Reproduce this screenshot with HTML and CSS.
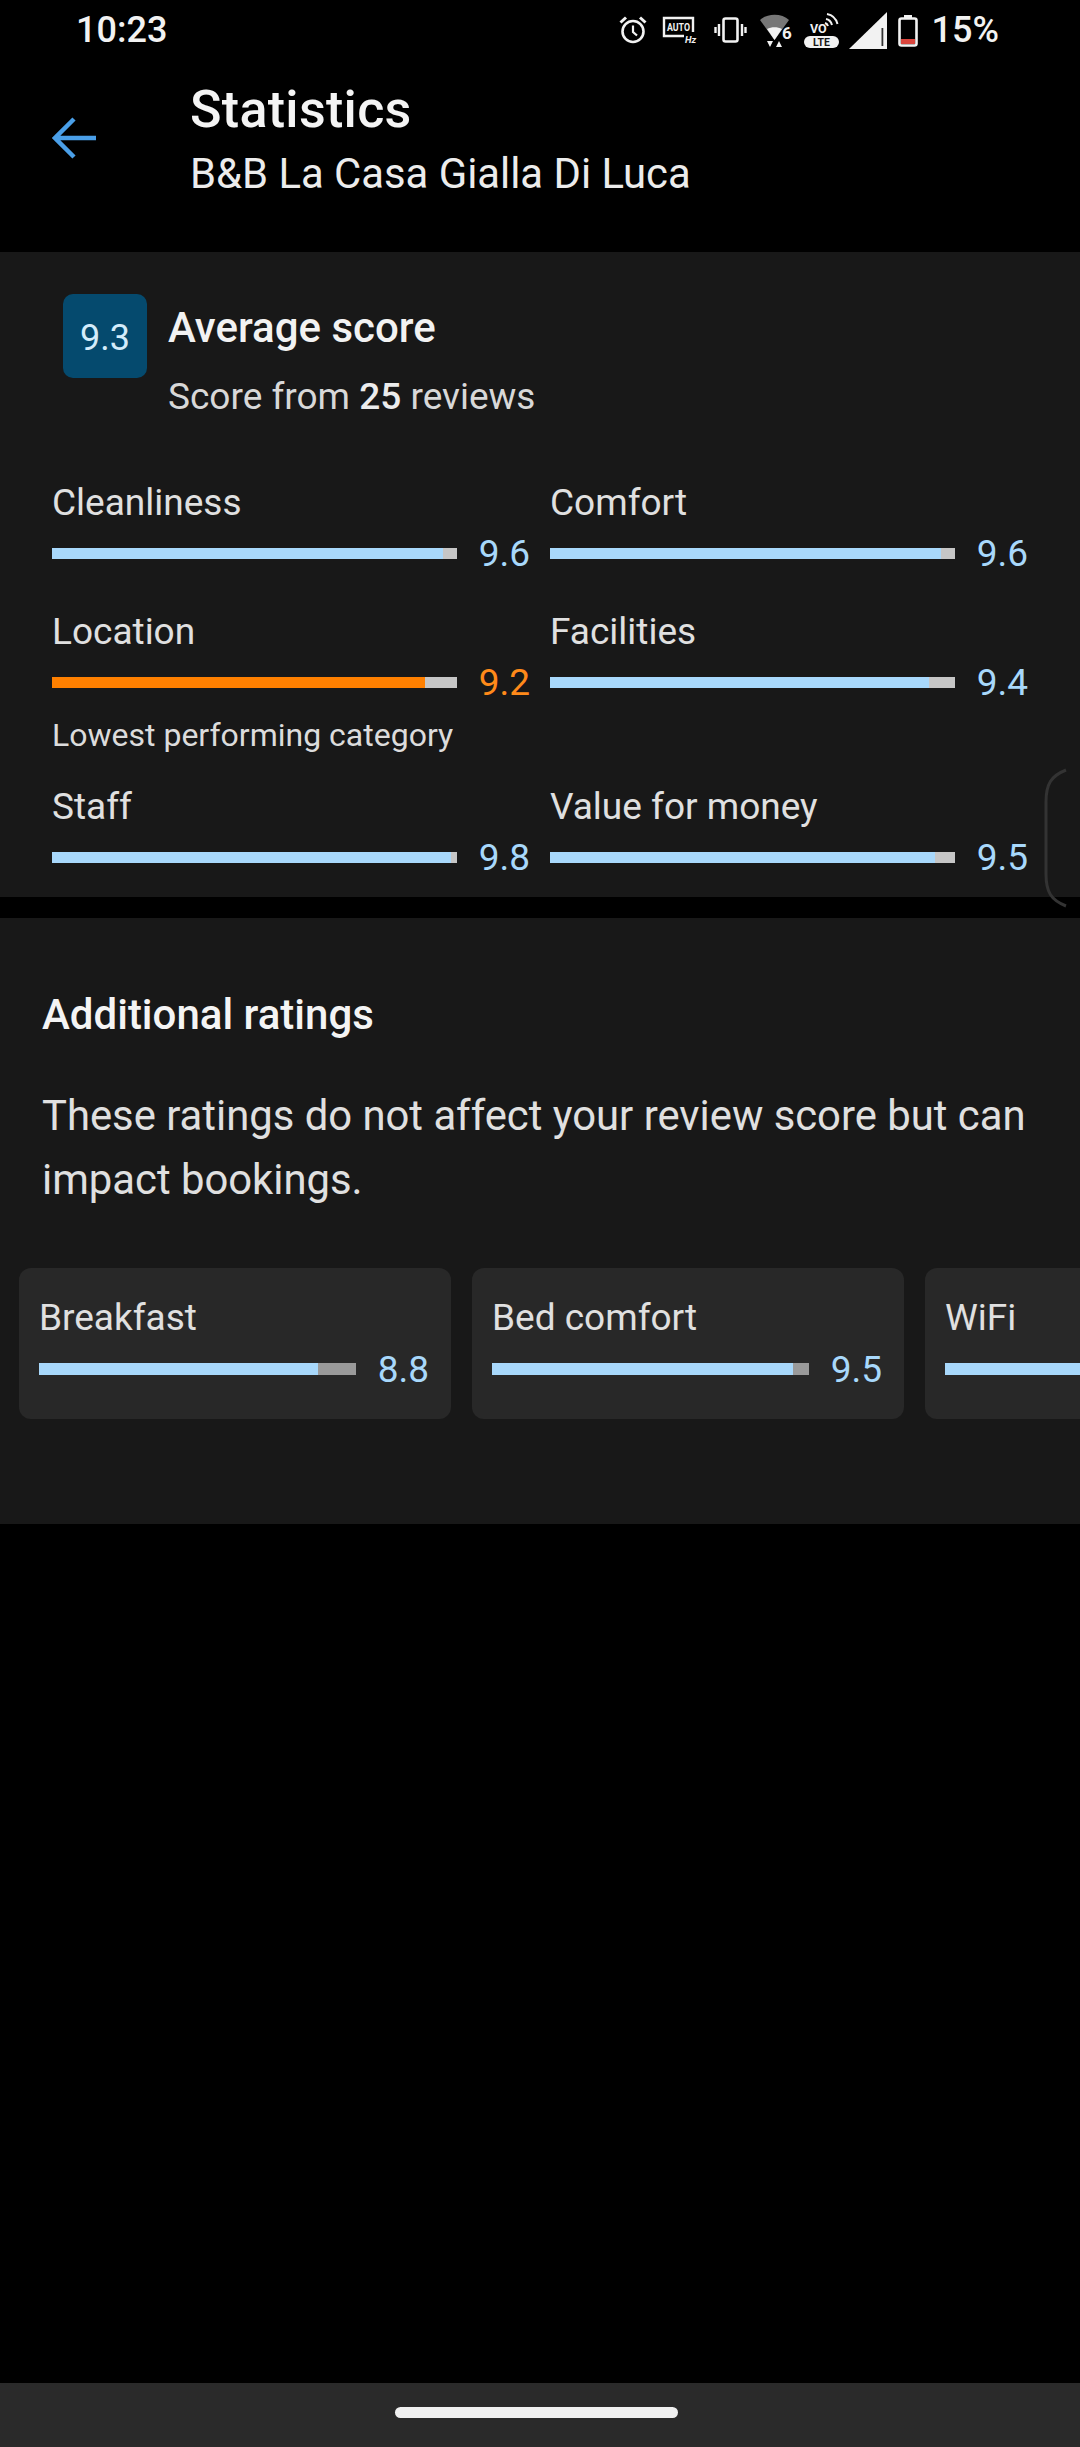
FILE: index.html
```html
<!DOCTYPE html>
<html lang="en">
<head>
<meta charset="utf-8">
<title>Statistics</title>
<link rel="stylesheet" href="styles.css">
</head>
<body>
<div class="screen">
  <div class="status">
    <span class="time">10:23</span>
    <div class="status-right">
      <svg class="ic" width="28" height="28" viewBox="0 0 28 28" fill="none" stroke="#f2f2f2" stroke-width="2.600"><circle cx="14" cy="15.500" r="10.500"/><path d="M14 9.500v6.500l4 3.500" stroke-width="2.200"/><path d="M1.500 6.500 7 1.500M26.500 6.500 21 1.500" stroke-width="3"/></svg>
      <svg class="ic auto" width="36" height="28" viewBox="0 0 36 28" fill="none"><path d="M22 20H2V2h29v14" stroke="#f2f2f2" stroke-width="2.400"/><text class="ic-text" x="16.500" y="15" font-size="11" text-anchor="middle" textLength="23" lengthAdjust="spacingAndGlyphs">AUTO</text><text class="ic-text ic-italic" x="23" y="26.500" font-size="9.500">Hz</text></svg>
      <svg class="ic vib" width="33" height="26" viewBox="0 0 33 26" fill="none" stroke="#f2f2f2"><rect x="9.500" y="1.500" width="14" height="23" rx="2" stroke-width="2.600"/><path d="M5 7v12M1.500 10v6M28 7v12M31.500 10v6" stroke-width="2.400"/></svg>
      <svg class="ic wifi" width="34" height="33" viewBox="0 0 34 33"><path d="M0 6C7-1 22-1 29 6L14.500 26z" fill="#777"/><path d="M7 15c4.500-2.500 10.500-2.500 15 0l-7.500 11z" fill="#f2f2f2"/><path d="M7 27h6l-3 6zM16 33h6l-3-6z" fill="#f2f2f2"/><text class="ic-text" x="22" y="24.500" font-size="17">6</text></svg>
      <svg class="ic volte" width="35" height="35" viewBox="0 0 35 35" fill="none"><rect x="0" y="23" width="35" height="12" rx="6" fill="#f2f2f2"/><text class="ic-text ic-dark" x="17.500" y="33" font-size="10.500" text-anchor="middle">LTE</text><text class="ic-text" x="6" y="20" font-size="12.500">VO</text><path d="M22 6c3 .5 5 2.500 6 6M23 1c5.500 1 9 4.500 10.500 10M21 10c1.500.5 2.500 1.500 3 3" stroke="#f2f2f2" stroke-width="2"/></svg>
      <svg class="ic signal" width="38" height="37" viewBox="0 0 38 37"><path d="M38 0v37H0z" fill="#f2f2f2"/><path d="M32.500 16h1.800v18h-1.800z" fill="#333"/></svg>
      <svg class="ic batt" width="20" height="33" viewBox="0 0 20 33" fill="none"><path d="M6 1h8v3H6z" fill="#f2f2f2"/><rect x="1.500" y="4.500" width="17" height="27" rx="2" stroke="#f2f2f2" stroke-width="2.600"/><rect x="3" y="25" width="14" height="5" fill="#d9453d"/></svg>
      <span class="pct">15%</span>
    </div>
  </div>

  <header class="topbar">
    <svg class="back" width="44" height="42" viewBox="0 0 44 42" fill="none" stroke="#4a9fe8" stroke-width="4.500"><path d="M44 21H3M22 2 3 21l19 19"/></svg>
    <div class="titles">
      <h1 class="title">Statistics</h1>
      <p class="subtitle">B&amp;B La Casa Gialla Di Luca</p>
    </div>
  </header>

  <section class="panel summary-panel">
    <div class="summary">
      <div class="badge">9.3</div>
      <div>
        <h2 class="avg">Average score</h2>
        <p class="from">Score from <b>25</b> reviews</p>
      </div>
    </div>
    <div class="stats">
      <div class="stat">
        <div class="label">Cleanliness</div>
        <div class="row"><div class="track"><div class="fill" style="width:96.5%"></div></div><span class="score">9.6</span></div>
      </div>
      <div class="stat">
        <div class="label">Comfort</div>
        <div class="row"><div class="track"><div class="fill" style="width:96.5%"></div></div><span class="score">9.6</span></div>
      </div>
      <div class="stat">
        <div class="label">Location</div>
        <div class="row"><div class="track"><div class="fill low" style="width:92%"></div></div><span class="score low-text">9.2</span></div>
        <div class="note">Lowest performing category</div>
      </div>
      <div class="stat">
        <div class="label">Facilities</div>
        <div class="row"><div class="track"><div class="fill" style="width:93.5%"></div></div><span class="score">9.4</span></div>
      </div>
      <div class="stat">
        <div class="label">Staff</div>
        <div class="row"><div class="track"><div class="fill" style="width:98.5%"></div></div><span class="score">9.8</span></div>
      </div>
      <div class="stat">
        <div class="label">Value for money</div>
        <div class="row"><div class="track"><div class="fill" style="width:95%"></div></div><span class="score">9.5</span></div>
      </div>
    </div>
  </section>

  <section class="panel extra-panel">
    <h2 class="extra-title">Additional ratings</h2>
    <p class="extra-text">These ratings do not affect your review score but can impact bookings.</p>
    <div class="cards">
      <div class="card">
        <div class="label">Breakfast</div>
        <div class="row"><div class="track dim"><div class="fill" style="width:88%"></div></div><span class="score">8.8</span></div>
      </div>
      <div class="card">
        <div class="label">Bed comfort</div>
        <div class="row"><div class="track dim"><div class="fill" style="width:95%"></div></div><span class="score">9.5</span></div>
      </div>
      <div class="card">
        <div class="label">WiFi</div>
        <div class="row"><div class="track dim"><div class="fill" style="width:95%"></div></div></div>
      </div>
    </div>
  </section>

  <div class="spacer"></div>
  <nav class="navbar"><div class="pill"></div></nav>

  <svg class="handle" width="24" height="140" viewBox="0 0 24 140" fill="none" stroke="#333" stroke-width="3"><path d="M23 2C8 8 3 16 3 34v72c0 18 5 26 20 32"/></svg>
</div>
</body>
</html>
```

FILE: styles.css
```css
* { box-sizing: border-box; }
html, body { margin: 0; padding: 0; background: #000; }
.screen {
  position: relative;
  width: 1080px;
  height: 2447px;
  display: flex;
  flex-direction: column;
  overflow: hidden;
  background: #000;
  font-family: Roboto, "Liberation Sans", sans-serif;
  color: #e6e6e6;
}
h1, h2, p { margin: 0; font-weight: 400; }

.status {
  height: 60px;
  display: flex;
  justify-content: space-between;
  align-items: center;
  padding: 0 81px 0 76px;
  color: #f2f2f2;
}
.time { font-size: 36px; font-weight: 500; }
.status-right { display: flex; align-items: center; }
.ic { display: block; flex: none; }
.ic-text { fill: #f2f2f2; font-family: Roboto, "Liberation Sans", sans-serif; font-weight: 700; }
.ic-italic { font-style: italic; }
.ic-dark { fill: #181818; }
.auto { margin-left: 15px; }
.vib { margin-left: 16px; }
.wifi { margin-left: 13px; }
.volte { margin-left: 10px; }
.signal { margin-left: 10px; }
.batt { margin-left: 11px; }
.pct { font-size: 36px; font-weight: 500; margin-left: 14px; }

.topbar {
  height: 192px;
  display: flex;
  padding: 18px 0 0 52px;
}
.back { margin-top: 39px; flex: none; }
.titles { margin-left: 94px; }
.title { font-size: 52px; font-weight: 500; letter-spacing: .3px; line-height: 64px; color: #f4f4f4; }
.subtitle { font-size: 41.8px; line-height: 48px; margin-top: 8px; color: #ececec; }

.panel { background: #181818; }
.summary-panel { padding: 42px 52px 11px; height: 645px; }
.summary { display: flex; margin: 0 0 60px 11px; }
.badge {
  width: 84px;
  height: 84px;
  flex: none;
  margin-right: 21px;
  padding-top: 3px;
  border-radius: 10px;
  background: #054a6e;
  color: #d4ecfb;
  font-size: 36px;
  display: flex;
  align-items: center;
  justify-content: center;
}
.avg { font-size: 42px; font-weight: 500; line-height: 44px; margin-top: 12px; color: #f2f2f2; }
.from { font-size: 37px; line-height: 44px; margin-top: 25px; color: #d8d8d8; }
.from b { font-weight: 500; color: #ececec; }

.stats {
  display: grid;
  grid-template-columns: 478px 478px;
  column-gap: 20px;
  row-gap: 28px;
  align-items: start;
}
.label { font-size: 37px; line-height: 44px; color: #e0e0e0; }
.stat .label { padding-top: 2px; }
.row { display: flex; align-items: center; height: 44px; margin-top: 6px; margin-bottom: 5px; gap: 21px; }
.track { flex: 1; height: 11px; background: #c6c6c6; }
.track.dim { background: #9a9a9a; height: 12px; }
.fill { height: 100%; background: #a8d8fb; }
.fill.low { background: #ff8000; }
.score { width: 52px; flex: none; font-size: 37px; color: #a8d8fb; text-align: right; }
.low-text { color: #ff8a1a; }
.note { font-size: 32px; line-height: 40px; margin-top: 11px; color: #dcdcdc; }

.extra-panel { margin-top: 21px; padding: 73px 0 105px; height: 606px; }
.extra-title { font-size: 42px; font-weight: 500; line-height: 48px; margin-left: 42px; color: #f4f4f4; }
.extra-text { font-size: 41.8px; line-height: 64px; margin: 45px 42px 0; color: #e0e0e0; }
.cards { display: flex; gap: 21px; margin-top: 56px; padding-left: 19px; overflow: hidden; }
.card {
  width: 432px;
  height: 151px;
  flex: none;
  padding: 28px 22px 28px 20px;
  border-radius: 12px;
  background: #282828;
}
.card .row { margin: 7px 0 0; }

.spacer { flex: 1; }
.navbar {
  height: 64px;
  background: #2a2a2a;
  display: flex;
  justify-content: center;
  padding: 24px 7px 0 0;
}
.pill { width: 283px; height: 11px; border-radius: 6px; background: #f0f0f0; }
.handle { position: absolute; left: 1043px; top: 768px; }
```
